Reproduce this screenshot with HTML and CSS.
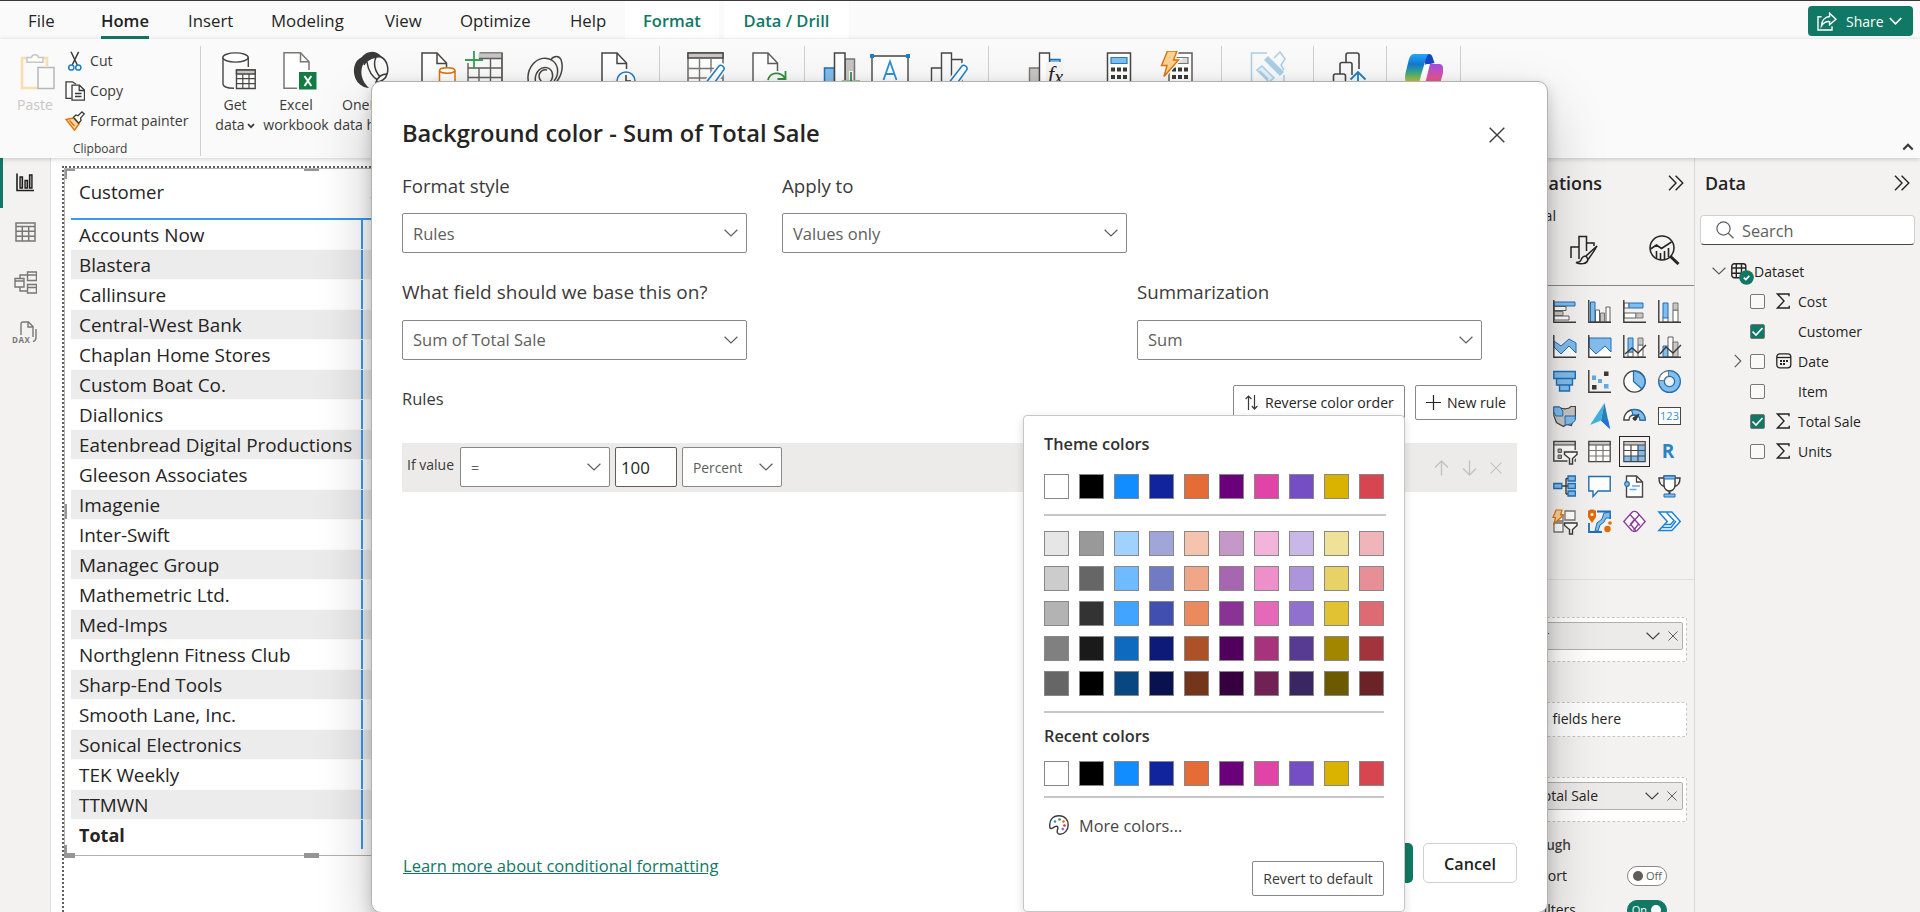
FILE: index.html
```html
<!DOCTYPE html>
<html lang="en">
<head>
<meta charset="utf-8">
<title>Background color</title>
<link rel="stylesheet" href="styles.css">
</head>
<body>
<svg class="defs" width="0" height="0">
  <defs>
    <symbol id="chev" viewBox="0 0 14 8"><path d="M.6.8 7 7 13.4.8" fill="none" stroke="currentColor" stroke-width="1.2"/></symbol>
    <symbol id="cross" viewBox="0 0 14 14"><path d="M.6.6 13.4 13.4M13.4.6.6 13.4" fill="none" stroke="currentColor" stroke-width="1.2"/></symbol>
    <symbol id="dbl" viewBox="0 0 16 16"><path d="M1 .8 8 8 1 15.200M7.600.8 14.800 8 7.600 15.200" fill="none" stroke="currentColor" stroke-width="1.400"/></symbol>
    <symbol id="sigma" viewBox="0 0 14 16"><path d="M13 3.200V1H1.500L8 8 1.500 15H13.200V12.800" fill="none" stroke="currentColor" stroke-width="1.400"/></symbol>
    <linearGradient id="cpA" x1="0" y1="0" x2="0" y2="1"><stop offset="0" stop-color="#22a7f5"/><stop offset=".35" stop-color="#1478d4"/><stop offset=".65" stop-color="#3fae7a"/><stop offset="1" stop-color="#f5c518"/></linearGradient>
    <linearGradient id="cpB" x1="0" y1="0" x2="0" y2="1"><stop offset="0" stop-color="#a24be8"/><stop offset=".5" stop-color="#e0559c"/><stop offset="1" stop-color="#f4633a"/></linearGradient>
  </defs>
</svg>
<div class="app">
  <header class="menubar">
    <nav class="menu">
      <a class="m m-file">File</a><a class="m m-home">Home</a><a class="m m-insert">Insert</a><a class="m m-model">Modeling</a><a class="m m-view">View</a><a class="m m-opt">Optimize</a><a class="m m-help">Help</a><a class="m ctx c-format">Format</a><a class="m ctx c-drill">Data / Drill</a>
    </nav>
    <button class="share">
      <svg width="20" height="19" viewBox="0 0 20 19" fill="none" stroke="#fff" stroke-width="1.400"><path d="M4.500 4.700H1V18h14v-3.800"/><path d="M12.600 1.300 19 7.200l-6.400 5.600V9.600C8.800 9.300 6.500 10.600 4.400 14c.2-5.200 3.300-9 8.200-9.500z"/></svg>
      <span>Share</span>
      <svg class="share-chev" width="13" height="8" viewBox="0 0 13 8"><path d="M.8 1 6.500 6.800 12.200 1" fill="none" stroke="#fff" stroke-width="1.600"/></svg>
    </button>
  </header>

  <section class="ribbon">
    <div class="grp g1">
      <div class="clip">
        <div class="paste">
          <svg width="36" height="40" viewBox="0 0 36 40"><path d="M8 7H2v30h16M22 7h5v8" fill="none" stroke="#f9dcb0" stroke-width="2.600"/><path d="M4.500 10v25h12V16H25v-6z" fill="#fafafa"/><path d="M7 6.500h4.500a3.600 3.600 0 0 1 7 0H23v4.800H7z" fill="#fff" stroke="#c8c6c4" stroke-width="1.500"/><path d="M18 16.500h16v21H18z" fill="#fafafa" stroke="#b9b7b5" stroke-width="1.500"/></svg>
          <span>Paste</span>
        </div>
        <div class="cliplist">
          <div class="cl"><svg width="20" height="20" viewBox="0 0 20 20" fill="none"><path d="M6 .8 12.300 14M13.600.8 7.200 14" stroke="#3b3a39" stroke-width="1.500"/><circle cx="6.300" cy="16.500" r="2.600" stroke="#1f7fc4" stroke-width="1.500"/><circle cx="13.300" cy="16.500" r="2.600" stroke="#1f7fc4" stroke-width="1.500"/></svg>Cut</div>
          <div class="cl"><svg width="20" height="20" viewBox="0 0 20 20" fill="none" stroke="#3b3a39" stroke-width="1.300"><path d="M6.500 17.300H1V.8h6.500l3.500 2.500"/><path d="M7 4.200h7.500l5 5v10H7z" fill="#fafafa"/><path d="M14.200 4.500v5h5M10 12.500h6.500M10 15.500h6.500"/></svg>Copy</div>
          <div class="cl"><svg width="20" height="20" viewBox="0 0 20 20" fill="none"><path d="M1 8.500 8.500 7l5.500 6-4.500 6.200z" fill="#fcd9a8" stroke="#d9730d" stroke-width="1.400"/><path d="M4.500 9.500 9.500 15" stroke="#d9730d" stroke-width="1.400"/><path d="M8.500 6.300 11 4l2 .8L17 .9l2.300 2-3.800 4.200.6 2.300-2.400 2.800z" fill="#fff" stroke="#3b3a39" stroke-width="1.300"/></svg>Format painter</div>
        </div>
      </div>
      <div class="glabel">Clipboard</div>
    </div>
    <div class="grp g2">
      <div class="btn b-get"><svg width="36" height="40" viewBox="0 0 36 40" fill="none" stroke="#484644" stroke-width="1.400"><path d="M2 6v27c0 2.500 4.500 4.300 11 4.300"/><ellipse cx="14.500" cy="6.500" rx="12.700" ry="4.600" fill="#fff"/><path d="M27.300 6v10"/><path d="M15.500 19h18.700v18.500H15.500z" fill="#fff"/><path d="M15.500 19h18.700v4H15.500z" fill="#c8c6c4"/><path d="M15.500 27.700h18.700M15.500 32.600h18.700M21.800 23v14.500M28 23v14.500" stroke-width="1.200"/></svg><span>Get</span><span class="l2">data<svg class="tiny" width="8" height="6" viewBox="0 0 8 6"><path d="m1 1.200 3 3 3-3" fill="none" stroke="#3b3a39" stroke-width="1.700"/></svg></span></div>
      <div class="btn b-excel"><svg width="36" height="40" viewBox="0 0 36 40" fill="none"><path d="M15 37.300H2V1.700h16.500l8.500 9V19" fill="#fff" stroke="#797775" stroke-width="1.500"/><path d="M18.500 2v8.700H27" stroke="#797775" stroke-width="1.500"/><path d="M17 21h17.500v17.500H17z" fill="#107c41"/><path d="m22.500 25 6.800 10M29.300 25l-6.800 10" stroke="#fff" stroke-width="2"/></svg><span>Excel</span><span class="l2">workbook</span></div>
      <div class="btn b-lake"><svg width="36" height="40" viewBox="0 0 36 40" fill="none" stroke="#3b3a39" stroke-width="1.500"><path d="M9 7C2 10 0 19 3 27c2 5 7 8.500 11 9-6-6-8-15-5-22 2-4 5-7 8-8z" fill="#3b3a39"/><path d="M9 7c4-6 13-8 19-1-6-1-14 2-17 8" fill="#3b3a39"/><path d="M28 6c6 3 8 11 6 17M14 11c1 8 5 15 12 19M23 6c-3 7-1 14 4 20"/><path d="M34 23c-5 0-9 3-11 8 5 0 10-3 11-8z" fill="#fff"/></svg><span>OneLake</span><span class="l2">data hub<svg class="tiny" width="8" height="6" viewBox="0 0 8 6"><path d="m1 1.200 3 3 3-3" fill="none" stroke="#3b3a39" stroke-width="1.700"/></svg></span></div>
      <div class="btn b-sql"><svg width="36" height="40" viewBox="0 0 36 40" fill="none"><path d="M2 38V2h15l9.500 10v4" fill="#fff" stroke="#484644" stroke-width="1.500"/><path d="M17 2v10.500h9.500" stroke="#484644" stroke-width="1.500"/><path d="M19.500 19.500V38h15.500V19.500" fill="#fff" stroke="#d9730d" stroke-width="1.500"/><ellipse cx="27.200" cy="19.500" rx="7.700" ry="2.700" fill="#fff" stroke="#d9730d" stroke-width="1.500"/></svg></div>
      <div class="btn b-enter"><svg width="38" height="40" viewBox="0 0 38 40" fill="none"><path d="M3 12v26M14.500 2H37v36H3" stroke="#605e5c" stroke-width="1.400"/><path d="M13.500 2.500h23v5h-23z" fill="#c8c6c4"/><path d="M37 2v36M3 17h34M3 26.500h34M14 17v20M25.500 7.500V38M14 7.500h23" stroke="#605e5c" stroke-width="1.400"/><path d="M9 0v18M0 9h18" stroke="#35a156" stroke-width="1.800"/></svg></div>
      <div class="btn b-data"><svg width="36" height="40" viewBox="0 0 36 40" fill="none" stroke="#484644" stroke-width="1.500"><path d="M5 38C-1 31 0 20 6 13c5-6 14-8 20-3 6 5 6 14 1 20"/><path d="M12 38c-5-5-5-14 0-19 4-4 11-3 13 2 2 6-1 11-6 11-4 0-7-3-7-7s4-7 8-6"/><path d="M24 8.500c3-4 8-4 10 0 3 9 0 19-8 26"/></svg></div>
      <div class="btn b-rec"><svg width="36" height="40" viewBox="0 0 36 40" fill="none"><path d="M2 38V2h15l9.500 10v6" fill="#fff" stroke="#484644" stroke-width="1.500"/><path d="M17 2v10.500h9.500" stroke="#484644" stroke-width="1.500"/><circle cx="26" cy="30" r="9" fill="#fff" stroke="#1f7fc4" stroke-width="1.500"/><path d="M26 24v6h5" stroke="#3b3a39" stroke-width="1.500"/></svg></div>
    </div>
    <div class="grp g3">
      <div class="btn b-trans"><svg width="40" height="40" viewBox="0 0 40 40" fill="none"><path d="M2 2h35v36H2z" fill="#fff" stroke="#605e5c" stroke-width="1.400"/><path d="M2 2h35v5H2z" fill="#c8c6c4" stroke="#484644" stroke-width="1.400"/><path d="M2 17.500h35M2 27h35M13.500 7v31M25 7v31" stroke="#797775" stroke-width="1.400"/><path d="m19 33 14-18c1.500-2 6 .5 5 3.500L24 38z" fill="#fff" stroke="#fafafa" stroke-width="5"/><path d="m19 33 14-18c1.500-2 6 .5 5 3.500L24 38z" fill="#fff" stroke="#1f7fc4" stroke-width="1.500"/></svg></div>
      <div class="btn b-refresh"><svg width="36" height="40" viewBox="0 0 36 40" fill="none"><path d="M2 38V2h15l9.500 10v8" fill="#fff" stroke="#605e5c" stroke-width="1.500"/><path d="M17 2v10.500h9.500" stroke="#605e5c" stroke-width="1.500"/><path d="M17 29c2-8 12-9 17-2M34.500 20v8h-8" stroke="#35913f" stroke-width="1.800"/></svg></div>
    </div>
    <div class="grp g4">
      <div class="btn b-newv"><svg width="38" height="40" viewBox="0 0 38 40" fill="none" stroke-width="1.500"><path d="M1.500 17h10v22h-10z" fill="#83bdec" stroke="#1f6fb5"/><path d="M22 8h9.500v30H22z" fill="#c8c6c4" stroke="#797775"/><path d="M11.500 2H22v37H11.500z" fill="#fff" stroke="#484644"/><path d="M28 20v18M19 31h18" stroke="#fafafa" stroke-width="4"/><path d="M28 21v18M19 30.500h18" stroke="#35913f" stroke-width="1.800"/></svg></div>
      <div class="btn b-text"><svg width="40" height="40" viewBox="0 0 40 40" fill="none"><path d="M2 5h36v34H2z" fill="#fff" stroke="#484644" stroke-width="1.400"/><path d="M0 3h4v4H0zM36 3h4v4h-4z" fill="#1f7fc4"/><path d="m13.500 29 6.500-18.500L26.500 29M15.800 23h8.400" stroke="#2f8fd6" stroke-width="1.800"/></svg></div>
      <div class="btn b-more"><svg width="38" height="40" viewBox="0 0 38 40" fill="none" stroke="#484644" stroke-width="1.400"><path d="M1.500 39V17h10v22M11.500 39V2h10v37M21.500 8.500H32V39"/><path d="m18 33 14-18c1.500-2 6 .5 5 3.500L23 38z" fill="#fff" stroke="#fafafa" stroke-width="5"/><path d="m18 33 14-18c1.500-2 6 .5 5 3.500L23 38z" fill="#fff" stroke="#1f7fc4" stroke-width="1.500"/></svg></div>
    </div>
    <div class="grp g5">
      <div class="btn b-meas"><svg width="36" height="40" viewBox="0 0 36 40" fill="none" stroke-width="1.400"><path d="M1.500 17h10v22h-10z" fill="#c8c6c4" stroke="#797775"/><path d="M21.500 8.500H32v12H21.500z" fill="#83bdec" stroke="#1f6fb5"/><path d="M11.500 2h10v37h-10z" fill="#fff" stroke="#484644"/></svg><i class="fx">f<small>x</small></i></div>
      <div class="btn b-calc"><svg width="26" height="40" viewBox="0 0 26 40"><path d="M1.500 2h23v37h-23z" fill="#fff" stroke="#484644" stroke-width="1.500"/><path d="M5 6.500h16v6H5z" fill="#83bdec" stroke="#1f7fc4" stroke-width="1.200"/><path d="M5 16.500h4v4H5zm6 0h4v4h-4zm6 0h4v4h-4zM5 24h4v4H5zm6 0h4v4h-4zm6 0h4v4h-4z" fill="#3b3a39"/></svg></div>
      <div class="btn b-quick"><svg width="34" height="40" viewBox="0 0 34 40"><path d="M9 2h23v37H9z" fill="#fff" stroke="#605e5c" stroke-width="1.500"/><path d="M16 6.500h12v6H16z" fill="#e1dfdd" stroke="#797775" stroke-width="1.200"/><path d="M12 16.500h4v4h-4zm6 0h4v4h-4zm6 0h4v4h-4zM12 24h4v4h-4zm6 0h4v4h-4zm6 0h4v4h-4z" fill="#3b3a39"/><path d="M7.500 0H17l-3.500 9h5L4 25.500l3-11H1.500z" fill="#fcd293" stroke="#fafafa" stroke-width="4"/><path d="M7.500 0H17l-3.500 9h5L4 25.500l3-11H1.500z" fill="#fcd293" stroke="#d9730d" stroke-width="1.400"/></svg></div>
    </div>
    <div class="grp g6"><div class="btn"><svg width="36" height="40" viewBox="0 0 36 40" fill="none" stroke="#a9cfe8" stroke-width="1.500"><path d="M17 2H1.500v37H34V24"/><path d="m7 19 5-4 12 12-5 4zM10 20l8 8" fill="#e3f1fa"/><path d="m15 9 3-3 15 15-3 3z" fill="#a9cfe8"/><path d="m24 7 6-6 5 7-4 6 3 5"/></svg></div></div>
    <div class="grp g7"><div class="btn"><svg width="36" height="40" viewBox="0 0 36 40" fill="none" stroke="#484644" stroke-width="1.600"><path d="M1.500 39V25c0-1.500.5-2 2-2h8c1.500 0 2 .5 2 2v14M8 23v-9.500c0-1.500.5-2 2-2h8c1.500 0 2 .5 2 2V24M14 11.500V4c0-1.500.5-2 2-2h9c1.500 0 2 .5 2 2v14"/><path d="M26 39V21M18.500 28.500 26 21l7.500 7.500" stroke="#1f7fc4" stroke-width="1.800"/></svg></div></div>
    <div class="grp g8"><div class="btn"><svg width="38" height="40" viewBox="0 0 38 40"><path d="M18 3h6c3 0 3.500 3 4.500 6l1 3-9 2z" fill="#1746c7"/><path d="M9 3h15c-2 1-3 4-4 8l-4 13c-1 6-2 9-5 9H4c-4 0-4.500-5-3.500-11l3-12c1-4 2.500-7 5.500-7z" fill="url(#cpA)"/><path d="M22 13h12c4 0 5 4 4 9l-3 11c-1 5-3 6-7 6H12c-2 0-3-3-2-6h5c3 0 3-2 4-5z" fill="url(#cpB)"/><path d="M22.500 13c-2 0-3 2-3.500 4l-4.500 15h3.500c2 0 2.500-1 3-3l4-16z" fill="#fff"/></svg></div></div>
    <svg class="collapse" width="12" height="8" viewBox="0 0 12 8"><path d="m1.300 6.500 4.700-4.700 4.700 4.700" fill="none" stroke="#3b3a39" stroke-width="2.200"/></svg>
  </section>

  <main class="body">
    <aside class="views">
      <div class="v on"><svg width="18" height="19" viewBox="0 0 18 19" fill="none" stroke="#201f1e" stroke-width="1.300"><path d="M1 .5V17.500h17" stroke-width="1.600"/><path d="M4 4h2.500v11H4zM9 7.500h2.500V15H9zM13.500 2H16v13h-2.500z" fill="#a19f9d"/></svg></div>
      <div class="v"><svg width="21" height="20" viewBox="0 0 21 20" fill="none" stroke="#797775" stroke-width="1.500"><path d="M1 1h19v18H1zM1 4.500h19M1 9.300h19M1 14.200h19M7.300 4.500V19M13.700 4.500V19"/></svg></div>
      <div class="v"><svg width="23" height="23" viewBox="0 0 23 23" fill="none" stroke="#797775" stroke-width="1.400"><path d="M1 7.500h9v8.500H1zM1 10h9M13.500 1h9v8.500h-9zM13.500 4h9M13.500 13.500h9V22h-9zM13.500 16.500h9M6 7V4h7.500M6 16v4h7.500"/></svg></div>
      <div class="v"><svg width="22" height="22" viewBox="0 0 22 22" fill="none" stroke="#797775" stroke-width="1.400"><path d="M6 14V3c0-1.500.7-2 2-2h5.500L18 5.500V16M13 1v5h5M21 8v8.500c0 2.500-1 3.500-3 4"/></svg><b class="dax">DAX</b></div>
    </aside>

    <section class="canvas">
      <div class="page">
        <div class="visual">
          <i class="h tl"></i><i class="h tm"></i><i class="h ml"></i><i class="h bl"></i><i class="h bm"></i>
          <div class="thead"><span>Customer</span><span>Sum of Total Sale</span></div>
          <div class="trow"><span>Accounts Now</span></div>
          <div class="trow"><span>Blastera</span></div>
          <div class="trow"><span>Callinsure</span></div>
          <div class="trow"><span>Central-West Bank</span></div>
          <div class="trow"><span>Chaplan Home Stores</span></div>
          <div class="trow"><span>Custom Boat Co.</span></div>
          <div class="trow"><span>Diallonics</span></div>
          <div class="trow"><span>Eatenbread Digital Productions</span></div>
          <div class="trow"><span>Gleeson Associates</span></div>
          <div class="trow"><span>Imagenie</span></div>
          <div class="trow"><span>Inter-Swift</span></div>
          <div class="trow"><span>Managec Group</span></div>
          <div class="trow"><span>Mathemetric Ltd.</span></div>
          <div class="trow"><span>Med-Imps</span></div>
          <div class="trow"><span>Northglenn Fitness Club</span></div>
          <div class="trow"><span>Sharp-End Tools</span></div>
          <div class="trow"><span>Smooth Lane, Inc.</span></div>
          <div class="trow"><span>Sonical Electronics</span></div>
          <div class="trow"><span>TEK Weekly</span></div>
          <div class="trow"><span>TTMWN</span></div>
          <div class="trow total"><span>Total</span></div>
        </div>
      </div>
    </section>

    <aside class="viz">
      <div class="phead"><h3>Visualizations</h3><svg width="16" height="16"><use href="#dbl"/></svg></div>
      <div class="build">Build visual</div>
      <div class="vtabs">
        <svg width="28" height="30" viewBox="0 0 28 30" fill="none" stroke="#252423" stroke-width="1.500"><path d="M1 23V12h8M9 24V1.500h7.500V16M16.500 8H24v3"/><path d="M27 11 16 21l2 3.500c3-4 6-8 9-13.500zM16 21c-3 0-4 1-5 4-.7 2-2 2.500-5 2.500 4 2 11 2 12-3z"/></svg>
        <svg width="31" height="30" viewBox="0 0 31 30" fill="none" stroke="#252423" stroke-width="1.600"><circle cx="13" cy="13" r="12"/><path d="m1.500 14 6-4 5 3.500 10-6.500M7.500 16v7M11.500 18v7M15.500 16v8M19.500 13v9"/><path d="m21.500 21.500 8 7.500" stroke-width="3"/></svg>
      </div>
      <div class="vgrid">
        <svg viewBox="0 0 23 23"><path d="M1 2h21v4H1z" fill="#83bdec" stroke="#1f6fb5"/><path d="M1 6.500h12v4H1z" fill="#fff" stroke="#605e5c"/><path d="M1 11.500h9v4H1z" fill="#c8c6c4" stroke="#797775"/><path d="M1 16h15v4H1z" fill="#fff" stroke="#605e5c"/><path d="M.8 0v22.200H23" class="ax"/></svg>
        <svg viewBox="0 0 23 23"><path d="M2.500 2h4.500v20H2.500z" fill="#83bdec" stroke="#1f6fb5"/><path d="M7.500 10h4v12h-4zM18 7h4v15h-4z" fill="#fff" stroke="#605e5c"/><path d="M12.500 13h4v9h-4z" fill="#c8c6c4" stroke="#797775"/><path d="M.8 0v22.200H23" class="ax"/></svg>
        <svg viewBox="0 0 23 23"><path d="M1 3h5v5H1z" fill="#fff" stroke="#605e5c"/><path d="M6 3h14v5H6z" fill="#83bdec" stroke="#1f6fb5"/><path d="M1 13h12v5H1z" fill="#fff" stroke="#605e5c"/><path d="M13 13h7v5h-7z" fill="#c8c6c4" stroke="#797775"/><path d="M.8 0v22.200H23" class="ax"/></svg>
        <svg viewBox="0 0 23 23"><path d="M5 17h5v5H5zM15 10h5v12h-5z" fill="#fff" stroke="#605e5c"/><path d="M5 3h5v15H5z" fill="#83bdec" stroke="#1f6fb5"/><path d="M15 3h5v7h-5z" fill="#c8c6c4" stroke="#797775"/><path d="M.8 0v22.200H23" class="ax"/></svg>

        <svg viewBox="0 0 23 23"><path d="m1 14 7 5 8-9 7 8v4H1z" fill="#fff"/><path d="m1 6 7 5 8-7 7 4v10l-7-7-8 8-7-7z" fill="#83bdec" stroke="#1f6fb5"/><path d="M.8 0v22.200H23" class="ax"/></svg>
        <svg viewBox="0 0 23 23"><path d="M1 12v10h22V12z" fill="#fff"/><path d="M1 3h22v14l-6-6-9 8-7-7z" fill="#83bdec" stroke="#1f6fb5"/><path d="M.8 0v22.200H23" class="ax"/></svg>
        <svg viewBox="0 0 23 23"><path d="M5 17h5v5H5zM15 10h5v12h-5z" fill="#fff" stroke="#605e5c"/><path d="M5 3h5v14H5z" fill="#83bdec" stroke="#1f6fb5"/><path d="M15 3h5v7h-5z" fill="#c8c6c4" stroke="#797775"/><path d="m2 19 7-6 6 5 8-8" class="ax"/><path d="M.8 0v22.200H23" class="ax"/></svg>
        <svg viewBox="0 0 23 23"><path d="M5 11h5v11H5z" fill="#83bdec" stroke="#1f6fb5"/><path d="M10 2h5v20h-5z" fill="#fff" stroke="#605e5c"/><path d="M15 7h5v15h-5z" fill="#c8c6c4" stroke="#797775"/><path d="m2 19 6-7 7 6 8-8" class="ax"/><path d="M.8 0v22.200H23" class="ax"/></svg>

        <svg viewBox="0 0 23 23"><path d="M.8 1.500h21.500v7H.8zM3.500 8.500h16V15h-16zM6.500 15h10v6h-10z" fill="#83bdec" stroke="#1f6fb5" stroke-width="1.400"/></svg>
        <svg viewBox="0 0 23 23"><path d="M.8 0v22.200H23" class="ax"/><path d="M16 1.500h4.500V6H16zM4 15h4.500v4.500H4z" fill="#3b3a39"/><path d="M4 5.500h4V10H4zM10 9h4v4h-4zM16 14h4.500v4.500H16z" fill="#64a9e2"/></svg>
        <svg viewBox="0 0 23 23"><circle cx="11.500" cy="11.500" r="10.700" fill="#fff" stroke="#484644" stroke-width="1.300"/><path d="M10.500.8v10.700l8.500 7.500c7-9 1-17-8.500-18.200z" fill="#83bdec" stroke="#1f6fb5" stroke-width="1.300"/></svg>
        <svg viewBox="0 0 23 23"><circle cx="11.500" cy="11.500" r="8" fill="none" stroke="#1f6fb5" stroke-width="7"/><circle cx="11.500" cy="11.500" r="8" fill="none" stroke="#83bdec" stroke-width="4.500"/><path d="M1 10.500C1.500 5 5 1.500 10.500 1v5C8 6.500 6.500 8 6 10.500z" fill="#fff" stroke="#797775"/></svg>

        <svg viewBox="0 0 23 23"><path d="M.8 2h5c3 2.500 10 2.500 12-.5h4.600v12l-3 4-1 3-5-1-3 2-7-4-2.600-7z" fill="#c8c6c4" stroke="#484644" stroke-width="1.200"/><path d="M.8 2h6l3 4v5H3L.8 7zM12 11h10.200v4.500l-4 3.500-6 1z" fill="#83bdec" stroke="#1f6fb5"/></svg>
        <svg viewBox="0 0 23 23"><path d="M16.500-2 2 20l11-4.500z" fill="#3fb0e0"/><path d="M16.500-2 22 24l-9-8.500z" fill="#2a7fb8"/><path d="m13 15.500 9 8.500-2-9z" fill="#1b74e0"/></svg>
        <svg viewBox="0 0 23 23"><path d="M.8 15C1 9 5 4.500 11.500 4.500S22 9 22.200 15H17c0-3-2-5-5.500-5S6 12 6 15z" fill="#fff" stroke="#484644" stroke-width="1.300"/><path d="M8.500 5C17 3 22 9 22.200 15H17c0-3-2-6-7-5z" fill="#83bdec" stroke="#1f6fb5" stroke-width="1.200"/><path d="m16 9-3 6a2 2 0 0 1-3-2z" fill="#3b3a39" stroke="#3b3a39"/></svg>
        <span class="card123">123</span>

        <svg viewBox="0 0 23 23"><path d="M.8 1.500h21.400V21H.8z" fill="#fff" stroke="#484644" stroke-width="1.400"/><path d="M1 1.500h21v3.500H1z" fill="#c8c6c4" stroke="#484644"/><path d="M5 9h3.500v3.500H5zM5 15h3.500v3.500H5z" fill="#a19f9d" stroke="#605e5c"/><path d="M11.500 12H24v2.500l-4.500 4V24h-3v-5.500l-5-4z" fill="#fff" stroke="#f3f2f1" stroke-width="4"/><path d="M11.500 12H24v2.500l-4.500 4V24h-3v-5.500l-5-4z" fill="#fff" stroke="#3b3a39" stroke-width="1.400"/></svg>
        <svg viewBox="0 0 23 23"><path d="M.8 1.500h21.400v20.200H.8z" fill="#fff" stroke="#484644" stroke-width="1.300"/><path d="M1 1.500h21V5H1z" fill="#c8c6c4" stroke="#484644"/><path d="M1 10.500h21M1 16h21M8 5v16.500M15 5v16.500" fill="none" stroke="#797775" stroke-width="1.200"/></svg>
        <svg class="sel" viewBox="0 0 23 23"><path d="M.8 1.500h21.400v20.200H.8z" fill="#fff"/><path d="M15 5h7v16.500H1V16h14z" fill="#83bdec"/><path d="M1 1.500h21V5H1z" fill="#c8c6c4"/><path d="M.8 1.500h21.400v20.200H.8zM1 5h21M1 10.500h21M1 16h21M8 5v16.500M15 5v16.500" fill="none" stroke="#484644" stroke-width="1.200"/></svg>
        <span class="rvis">R</span>

        <svg viewBox="0 0 23 23"><path d="M9 11h4.500M13 3.500v15.500M13 3.500h3M13 19h3M13 11h3" fill="none" stroke="#3b3a39" stroke-width="1.400"/><path d="M.8 8.500h8v5h-8zM15 1h7.300v5H15zM15 8.500h7.300v5H15zM15 16h7.300v5H15z" fill="#83bdec" stroke="#1f6fb5" stroke-width="1.300"/></svg>
        <svg viewBox="0 0 23 23"><path d="M.8 1.500h21.400V16H10l-5 5.500V16H.8z" fill="#fff" stroke="#1f6fb5" stroke-width="1.400"/></svg>
        <svg viewBox="0 0 23 23"><path d="M3.500 1h10l6 6v15h-16z" fill="#fff" stroke="#484644" stroke-width="1.400"/><path d="M13.500 1v6h6" fill="none" stroke="#484644" stroke-width="1.300"/><path d="M9 11h8M6.500 14.500h7" stroke="#64a9e2" stroke-width="1.400"/><circle cx="4" cy="9" r="2.300" fill="#83bdec" stroke="#1f6fb5" stroke-width="1.200"/></svg>
        <svg viewBox="0 0 23 23"><path d="M6 3H1c0 6 2 8 6 8.500M17 3h5c0 6-2 8-6 8.500" fill="none" stroke="#3b3a39" stroke-width="1.400"/><path d="M6 1h11v9c0 5-4 6-5.500 6S6 15 6 10z" fill="#fff" stroke="#3b3a39" stroke-width="1.400"/><path d="M6 1h11v3H6zM6 19h11v3H6z" fill="#83bdec" stroke="#1f6fb5"/><path d="M11.500 16v3" stroke="#3b3a39" stroke-width="2"/></svg>

        <svg viewBox="0 0 23 23"><path d="M12 1h10v9H12zM1 13h9v9H1zM4 5h6v6H4z" fill="#fff" stroke="#797775" stroke-width="1.300"/><path d="M11.500 13H24v2.500l-4.500 4V24h-3v-4.500l-5-4z" fill="#fff" stroke="#3b3a39" stroke-width="1.400"/><path d="M3 0h6L7.500 5h3L1 14l1.500-6.500H0z" fill="#fcd293" stroke="#d9730d" stroke-width="1.200"/></svg>
        <svg viewBox="0 0 23 23"><path d="M9 1.500h13V9M1 13v9h13" fill="none" stroke="#1f6fb5" stroke-width="1.800"/><path d="M22 2v6h-4l-2 4-4 3-2 6H7l2-8 5-4 2-6z" fill="#83bdec" stroke="#1f6fb5"/><path d="M0 1c2-2 6-2 8 0v6l-4 6-4-6z" fill="#e06c00"/><circle cx="4" cy="4.500" r="1.500" fill="#fff"/><circle cx="19.500" cy="19" r="3.200" fill="#e06c00"/><circle cx="22" cy="13" r="1.800" fill="#e06c00"/></svg>
        <svg viewBox="0 0 23 23" fill="none" stroke="#8a3a9c" stroke-width="1.300"><path d="M.8 11.500 9 2.300c1-1.200 4-1.200 5 0l8.200 9.200-8.200 9.200c-1 1.200-4 1.200-5 0z" fill="#fff"/><path d="m7 4.500 10 11M16.500 4.500 6.500 16M11.500 9.500 7.500 14M15.500 14l-5 6.500M7.500 14l5.500 7"/></svg>
        <svg viewBox="0 0 23 23" fill="none" stroke="#1780dd" stroke-width="1.400"><path d="M.8 2h13l8.500 9.500-8.500 9h-13l8.500-9z" fill="#fff"/><path d="M8.500 2.500 16 10.500M4 17.500h9l5-6.500M6.500 14.500h6l4-4.500"/></svg>
      </div>
      <div class="wells">
        <div class="well w1"><div class="chip"><span>Customer</span><svg width="14" height="8"><use href="#chev"/></svg><svg width="10" height="10"><use href="#cross"/></svg></div></div>
        <div class="well w2">Add data fields here</div>
        <div class="well w3"><div class="chip"><span>Sum of Total Sale</span><svg width="14" height="8"><use href="#chev"/></svg><svg width="10" height="10"><use href="#cross"/></svg></div></div>
        <div class="dt"><span>Drill through</span></div>
        <div class="dr"><span>Cross-report</span><div class="tog">Off</div></div>
        <div class="dr r2"><span>Keep all filters</span><div class="tog on">On</div></div>
      </div>
    </aside>

    <aside class="data">
      <div class="phead"><h3>Data</h3><svg width="16" height="16"><use href="#dbl"/></svg></div>
      <div class="search"><svg width="18" height="18" viewBox="0 0 18 18" fill="none" stroke="#605e5c" stroke-width="1.200"><circle cx="7.500" cy="7.500" r="6.600"/><path d="m12.300 12.300 5.200 5"/></svg><span>Search</span></div>
      <div class="tree">
        <div class="ds"><svg class="dchev" width="14" height="8"><use href="#chev"/></svg>
          <div class="dsi"><svg width="16" height="16" viewBox="0 0 16 16" fill="none" stroke="#252423" stroke-width="1.400"><rect x=".8" y=".8" width="14" height="14" rx="2.500"/><path d="M1 5h14M1 10.300h14M5.300 1v14M10.500 1v14"/></svg><svg class="badge" width="15" height="15" viewBox="0 0 15 15"><circle cx="7.500" cy="7.500" r="7.300" fill="#117865"/><path d="m4.800 7.600 2 2 3.500-3.700" fill="none" stroke="#fff" stroke-width="1.700"/></svg></div>Dataset</div>
        <div class="f"><i class="cb"></i><svg class="ic" width="14" height="16"><use href="#sigma"/></svg><span>Cost</span></div>
        <div class="f"><i class="cb on"><svg width="13" height="13" viewBox="0 0 13 13"><path d="M1.500 6.500 5 10l6.500-7" fill="none" stroke="#fff" stroke-width="1.600"/></svg></i><i class="ic"></i><span>Customer</span></div>
        <div class="f exp"><svg class="xp" width="8" height="14" viewBox="0 0 8 14"><path d="m.8.8 6 6.200-6 6.200" fill="none" stroke="#605e5c" stroke-width="1.200"/></svg><i class="cb"></i><svg class="ic" width="16" height="16" viewBox="0 0 16 16" fill="none" stroke="#252423" stroke-width="1.300"><rect x=".8" y=".8" width="14" height="14" rx="3"/><path d="M1 4.500h14"/><path d="M4 8h2M7 8h2M10 8h2M4 11h2M7 11h2" stroke-width="1.800"/></svg><span>Date</span></div>
        <div class="f"><i class="cb"></i><i class="ic"></i><span>Item</span></div>
        <div class="f"><i class="cb on"><svg width="13" height="13" viewBox="0 0 13 13"><path d="M1.500 6.500 5 10l6.500-7" fill="none" stroke="#fff" stroke-width="1.600"/></svg></i><svg class="ic" width="14" height="16"><use href="#sigma"/></svg><span>Total Sale</span></div>
        <div class="f"><i class="cb"></i><svg class="ic" width="14" height="16"><use href="#sigma"/></svg><span>Units</span></div>
      </div>
    </aside>
  </main>

  <section class="dialog">
    <div class="dhead"><h2>Background color - Sum of Total Sale</h2><svg width="16" height="16"><use href="#cross"/></svg></div>
    <div class="frow">
      <div class="fld"><label>Format style</label><div class="dd">Rules<svg width="14" height="8"><use href="#chev"/></svg></div></div>
      <div class="fld"><label>Apply to</label><div class="dd">Values only<svg width="14" height="8"><use href="#chev"/></svg></div></div>
    </div>
    <div class="frow second">
      <div class="fld"><label class="wide-label">What field should we base this on?</label><div class="dd">Sum of Total Sale<svg width="14" height="8"><use href="#chev"/></svg></div></div>
      <div class="fld"><label>Summarization</label><div class="dd">Sum<svg width="14" height="8"><use href="#chev"/></svg></div></div>
    </div>
    <div class="rhead"><span class="rl">Rules</span>
      <button class="ob rev"><svg width="13" height="15" viewBox="0 0 13 15" fill="none" stroke="#3b3a39" stroke-width="1.200"><path d="M3.500 15V1M.6 4l2.900-3 2.900 3M9.500 0v14M6.800 11l2.700 3 2.900-3"/></svg>Reverse color order</button>
      <button class="ob new"><svg width="15" height="15" viewBox="0 0 15 15" stroke="#252423" stroke-width="1.200"><path d="M7.500 0v15M0 7.500h15"/></svg>New rule</button>
    </div>
    <div class="rule">
      <span class="iv">If value</span>
      <div class="dd op"><span>=</span><svg width="14" height="8"><use href="#chev"/></svg></div>
      <div class="num">100</div>
      <div class="dd pc"><span>Percent</span><svg width="14" height="8"><use href="#chev"/></svg></div>
      <div class="acts">
        <svg width="15" height="16" viewBox="0 0 15 16" fill="none" stroke="#c3c1bf" stroke-width="1.300"><path d="M7.500 15.500V1M1 7.500 7.500 1 14 7.500"/></svg>
        <svg width="15" height="16" viewBox="0 0 15 16" fill="none" stroke="#c3c1bf" stroke-width="1.300"><path d="M7.500.5V15M1 8.500 7.500 15 14 8.500"/></svg>
        <svg width="12" height="12"><use href="#cross"/></svg>
      </div>
    </div>
    <div class="dfoot"><a>Learn more about conditional formatting</a><button class="ok">OK</button><button class="cancel">Cancel</button></div>
  </section>

  <section class="picker">
    <h4>Theme colors</h4>
    <div class="sw theme" data-row="base"></div>
    <hr class="wide">
    <div class="sw shades"></div>
    <hr class="low">
    <h4 class="rc">Recent colors</h4>
    <div class="sw recent" data-row="base"></div>
    <hr class="last">
    <div class="more"><svg width="20" height="20" viewBox="0 0 20 20" fill="none"><path d="M1 13C-.5 5 4 .8 10 .8c6 0 9.200 4.200 9.200 9 0 5-3.500 9.400-8.200 9.400-3.500 0-3-3-2.300-5.200.7-2.300-.5-3.500-2.700-2.300C3.500 13 2 14.500 1 13z" stroke="#3b3a39" stroke-width="1.400"/><circle cx="6" cy="6.500" r="1.300" fill="#2f8fd6"/><circle cx="10.500" cy="4.500" r="1.300" fill="#35913f"/><circle cx="14.500" cy="6.500" r="1.300" fill="#d9730d"/><circle cx="15.500" cy="10.500" r="1.300" fill="#d13438"/><circle cx="13.800" cy="14" r="1.300" fill="#9b59d0"/></svg><span>More colors...</span></div>
    <button class="ob revert">Revert to default</button>
  </section>
</div>
<script src="swatches.js"></script>
</body>
</html>
```
FILE: swatches.js
```js
const base = "#FFFFFF #000000 #118DFF #12239E #E66C37 #6B007B #E044A7 #744EC2 #D9B300 #D64550".split(" ");
const shades = [
  "#E6E6E6 #999999 #A0D1FF #A0A7D8 #F5C4AF #C499CA #F3B4DC #C7B8E7 #F0E199 #EFB5B9",
  "#CCCCCC #666666 #70BBFF #717BC4 #F0A787 #A666B0 #EC8FCA #AC95DA #E8D166 #E68F96",
  "#B3B3B3 #333333 #41A4FF #414FB1 #EB895F #893395 #E669B9 #9071CE #E1C233 #DE6A73",
  "#808080 #1A1A1A #0D6ABF #0E1A77 #AD5129 #50005C #A8337D #573B92 #A38600 #A1343C",
  "#666666 #000000 #094780 #09124F #73361C #36003E #702254 #3A2761 #6D5A00 #6B2328"
].join(" ").split(" ");

function fill(el, colors) {
  for (const c of colors) {
    const s = document.createElement("i");
    s.style.backgroundColor = c;
    el.appendChild(s);
  }
}
document.querySelectorAll('[data-row="base"]').forEach(el => fill(el, base));
fill(document.querySelector(".shades"), shades);
```
FILE: styles.css
```css
* { box-sizing: border-box; }
body { margin: 0; font-family: "Open Sans", "Noto Sans", sans-serif; color: #252423; background: #fff; }
h2, h3, h4 { margin: 0; font-weight: 600; }
button { font-family: inherit; cursor: pointer; padding: 0; }
svg { display: block; flex: none; }
.defs { position: absolute; }
.app { position: relative; width: 1920px; height: 912px; overflow: hidden; display: flex; flex-direction: column; border-top: 1px solid #3b3a39; }

/* menu bar */
.menubar { height: 38px; flex: none; background: #fafafa; display: flex; justify-content: space-between; }
.menu { display: flex; padding-left: 28px; }
.m { font-size: 16.8px; line-height: 39px; height: 38px; white-space: nowrap; }
.m-file { width: 73px; }
.m-home { width: 48px; margin-right: 39px; font-weight: 600; font-size: 16.6px; box-shadow: inset 0 -3px #117865; color: #201f1e; }
.m-insert { width: 83px; }
.m-model { width: 114px; }
.m-view { width: 75px; }
.m-opt { width: 110px; }
.m-help { width: 55px; }
.ctx { background: #fff; color: #117865; font-weight: 600; font-size: 16.5px; text-align: center; }
.c-format { width: 94px; margin-right: 5px; }
.c-drill { width: 125px; }
.share { width: 105px; height: 30px; margin: 5px 7px 0 0; border: 0; border-radius: 4px; background: #117865; color: #fff; font-size: 14px; display: flex; align-items: center; padding-left: 9px; }
.share span { margin-left: 9px; margin-right: 5px; }

/* ribbon */
.ribbon { height: 119px; flex: none; background: #fafafa; display: flex; padding-top: 7px; position: relative; z-index: 1; box-shadow: 0 1px 5px rgba(0,0,0,.2); font-size: 14.1px; color: #3b3a39; }
.grp { height: 110px; border-right: 1px solid #d2d0ce; display: flex; padding-top: 5px; flex: none; }
.btn { display: flex; flex-direction: column; align-items: center; line-height: 20px; white-space: nowrap; flex: none; }
.btn > span { margin-top: 4px; }
.btn > .l2 { margin-top: 0; display: flex; align-items: center; }
.tiny { margin: 2px 0 0 2px; }
.g1 { width: 201px; flex-direction: column; padding-left: 17px; }
.clip { display: flex; height: 84px; flex: none; }
.paste { width: 36px; margin-right: 12px; line-height: 20px; color: #c8c6c4; display: flex; flex-direction: column; align-items: center; }
.paste svg { margin-left: 6px; }
.paste span { margin-top: 4px; }
.cliplist { display: flex; flex-direction: column; gap: 10px; white-space: nowrap; }
.cl { display: flex; gap: 5px; line-height: 20px; }
.glabel { font-size: 12px; line-height: 20px; padding: 4px 0 0 56px; }
.g2 { width: 459px; padding-left: 7px; }
.b-get { width: 54px; }
.b-get > svg { margin-left: 8px; }
.b-excel { width: 68px; }
.b-excel > svg { margin-left: 7px; }
.b-lake { width: 82px; }
.b-lake .l2 { margin-right: 6px; }
.b-sql { width: 52px; }
.b-enter { width: 42px; }
.b-enter svg { margin-left: -2px; }
.b-data { width: 78px; }
.b-rec { width: 68px; }
.g3 { width: 145px; padding-left: 16px; }
.b-trans { width: 60px; }
.b-refresh { width: 66px; }
.g4 { width: 184px; padding-left: 14px; }
.b-newv { width: 46px; }
.b-text { width: 50px; }
.b-more { width: 68px; }
.g5 { width: 233px; padding-left: 20px; }
.b-meas { width: 74px; position: relative; }
.fx { position: absolute; left: 37px; top: 11px; font: italic 22px/24px "Liberation Serif", serif; color: #252423; background: #f6f6f6; padding-left: 2px; }
.fx small { font-size: 20px; position: relative; top: 3px; }
.b-calc { width: 71px; }
.b-quick { width: 46px; }
.g6 { width: 92px; justify-content: center; }
.g7 { width: 73px; justify-content: center; }
.g8 { width: 74px; justify-content: center; }
.collapse { margin: 97px 6px 0 auto; }

/* body */
.body { flex: 1; min-height: 0; display: flex; }
.views { width: 51px; flex: none; background: #f3f2f1; border-right: 1px solid #e1dfdd; }
.v { height: 50px; display: flex; flex-direction: column; align-items: center; justify-content: center; border-left: 3px solid transparent; padding: 0 2px 2px 0; position: relative; }
.v.on { border-color: #117865; padding-right: 3px; }
.dax { position: absolute; left: 9px; top: 28px; font: 700 8px/8px "Open Sans", sans-serif; color: #797775; background: #f3f2f1; letter-spacing: .5px; }
.canvas { width: 1419px; flex: none; padding: 8px 0 0 11px; }
.page { height: 746px; border: 2px dotted #605e5c; border-width: 2px 0 0 2px; }
.visual { position: relative; width: 500px; height: 688px; border: 1px solid #b3b0ad; padding-left: 6px; }
.h { position: absolute; background: #979593; }
.tl { left: 0; top: 0; width: 10px; height: 10px; background: none; border: 2px solid #979593; border-width: 2px 0 0 2px; }
.tm { left: 239px; top: 0; width: 15px; height: 2px; }
.ml { left: 0; top: 335px; width: 2px; height: 15px; }
.bl { left: -1px; bottom: -3px; width: 11px; height: 13px; background: none; border: 0 solid #979593; border-width: 0 0 5px 3px; }
.bm { left: 239px; bottom: -3px; width: 15px; height: 5px; }
.thead { display: flex; height: 51px; line-height: 46px; font-size: 18.6px; border-bottom: 2px solid #3599f5; padding-left: 8px; white-space: nowrap; }
.thead span:first-child { width: 291px; }
.trow { height: 30px; font-size: 18.9px; padding-left: 8px; background-clip: padding-box; border-bottom: 1px solid #fafafa; white-space: nowrap; }
.trow span { display: block; width: 284px; height: 29px; line-height: 31px; border-right: 2px solid #3599f5; }
.trow:nth-of-type(odd) { background-color: #ececec; }
.total { font-weight: 700; font-size: 18px; border: 0; }

/* visualizations pane */
.viz { width: 225px; flex: none; background: #f3f2f1; border-right: 1px solid #dad8d6; }
.phead { height: 50px; display: flex; align-items: center; justify-content: space-between; }
.phead h3 { font-size: 17.9px; }
.viz .phead { padding-right: 10px; }
.viz .phead h3 { width: 132px; display: flex; justify-content: flex-end; }
.build { width: 86px; line-height: 16px; height: 16px; font-size: 14.1px; text-align: right; }
.vtabs { height: 62px; border-bottom: 1px solid #8a8886; display: flex; gap: 51px; padding: 11px 0 0 100px; }
.vgrid { display: grid; grid-template-columns: repeat(4, 23px); grid-auto-rows: 23px; gap: 12px; padding: 14px 0 0 83px; height: 294px; align-content: start; border-bottom: 1px solid #e1dfdd; }
.vgrid svg { width: 23px; height: 23px; overflow: visible; }
.ax { fill: none; stroke: #3b3a39; stroke-width: 1.4; }
.sel { outline: 1px solid #252423; outline-offset: 3px; }
.card123 { border: 1.500px solid #484644; height: 18px; margin-top: 2px; background: #fff; color: #2f8fd6; font-size: 11px; line-height: 15px; text-align: center; }
.rvis { color: #2b83c2; font-weight: 700; font-size: 19px; line-height: 23px; text-align: center; padding-right: 3px; }
.wells { font-size: 14px; padding: 37px 7px 0 10px; }
.well { border: 1px dashed #c8c6c4; background: #fff; border-radius: 2px; height: 45px; padding: 4px 3px 0; }
.w2 { height: 35px; margin: 40px 0; padding: 0 65px 0 0; text-align: right; line-height: 32px; }
.chip { height: 28px; border: 1px solid #b3b0ad; border-radius: 2px; background: #edebe9; display: flex; align-items: center; padding-right: 5px; gap: 8px; }
.chip svg { color: #484644; }
.chip span { width: 114px; display: flex; justify-content: flex-end; margin-right: 39px; white-space: nowrap; line-height: 26px; }
.w1 .chip span { width: 64px; margin-right: 89px; }
.dt { margin-top: 11px; line-height: 24px; font-weight: 600; font-size: 13.6px; width: 91px; display: flex; justify-content: flex-end; color: #484644; white-space: nowrap; }
.dr { margin-top: 9px; display: flex; height: 20px; line-height: 20px; white-space: nowrap; }
.dr span { width: 87px; display: flex; justify-content: flex-end; }
.dr .tog { margin-left: 60px; }
.r2 { margin-top: 14px; }
.r2 span { width: 96px; }
.dr.r2 .tog { margin-left: 51px; }
.tog { width: 40px; height: 20px; border: 1px solid #8a8886; border-radius: 10px; background: #fff; font-size: 11px; line-height: 18px; color: #605e5c; display: flex; align-items: center; gap: 3px; padding-left: 5px; }
.tog::before { content: ""; width: 10px; height: 10px; border-radius: 50%; background: #605e5c; }
.tog.on { background: #117865; border-color: #117865; color: #fff; flex-direction: row-reverse; padding: 0 5px 0 0; gap: 4px; }
.tog.on::before { background: #fff; }

/* data pane */
.data { flex: 1; background: #f3f2f1; font-size: 14px; }
.data .phead { padding: 0 10px 0 10px; }
.search { margin: 7px 5px 0; height: 30px; background: #fff; border: 1px solid #d2d0ce; border-bottom: 1px solid #484644; border-radius: 4px; font-size: 16.3px; color: #605e5c; display: flex; align-items: center; padding-left: 15px; gap: 8px; }
.search span { padding-top: 2px; }
.tree { padding-top: 11px; }
.ds, .f { height: 30px; display: flex; align-items: center; }
.ds { padding-left: 17px; }
.dchev { color: #605e5c; margin-right: 5px; }
.dsi { position: relative; width: 16px; margin-right: 7px; }
.badge { position: absolute; left: 8px; top: 7px; }
.f { padding-left: 55px; }
.f.exp { padding-left: 39px; }
.xp { margin-right: 8px; }
.cb { width: 15px; height: 15px; border: 1px solid #797775; border-radius: 2px; background: #faf9f8; margin-right: 11px; flex: none; }
.cb.on { background: #117865; }
.ic { width: 14px; margin-right: 8px; }
.exp .ic { width: 16px; margin-right: 6px; }

/* dialog */
.dialog { position: absolute; z-index: 5; left: 371px; top: 80px; width: 1177px; height: 832px; background: #fff; border: 1px solid #b3b0ad; border-radius: 10px; box-shadow: 0 26px 57px rgba(0,0,0,.22), 0 5px 14px rgba(0,0,0,.18); padding: 31px 30px 29px; display: flex; flex-direction: column; }
.dhead { height: 40px; display: flex; justify-content: space-between; align-items: center; padding-right: 12px; margin-bottom: 21px; color: #3b3a39; }
.dhead h2 { font-size: 23.7px; line-height: 40px; color: #252423; }
.dhead svg { margin-top: 3px; }
.frow { display: flex; gap: 35px; }
.frow label { display: block; font-size: 18.7px; line-height: 24px; margin-bottom: 15px; color: #3b3a39; }
.frow .wide-label { font-size: 19px; }
.frow.second { margin-top: 27px; justify-content: space-between; padding-right: 35px; }
.frow.second label { margin-bottom: 16px; }
.dd { width: 345px; height: 40px; background: #fff; border: 1px solid #8a8886; border-radius: 2px; display: flex; align-items: center; justify-content: space-between; padding: 0 8px 0 10px; font-size: 16.5px; color: #605e5c; }
.second .dd { padding-bottom: 1px; }
.rhead { margin-top: 25px; height: 35px; display: flex; }
.rl { font-size: 16.5px; line-height: 27px; flex: 1; color: #3b3a39; }
.ob { background: #fff; border: 1px solid #8a8886; border-radius: 2px; height: 35px; font-size: 14.1px; color: #252423; display: flex; align-items: center; white-space: nowrap; }
.rev { width: 172px; padding-left: 11px; gap: 7px; margin-right: 10px; }
.new { width: 102px; padding-left: 10px; gap: 6px; }
.rule { margin-top: 23px; height: 49px; background: #edebe9; display: flex; padding: 4px 15px 0 5px; font-size: 14px; color: #3b3a39; }
.iv { width: 53px; line-height: 36px; }
.op { width: 150px; margin-right: 5px; font-size: 14px; }
.num { width: 62px; height: 40px; border: 1px solid #605e5c; border-radius: 2px; background: #fff; font-size: 16.8px; line-height: 40px; padding-left: 5px; color: #252423; margin-right: 5px; }
.pc { width: 100px; font-size: 13.8px; }
.acts { margin-left: auto; display: flex; gap: 13px; align-items: center; height: 41px; color: #c3c1bf; }
.dfoot { margin-top: auto; display: flex; height: 40px; }
.dfoot a { color: #117865; font-size: 16.55px; line-height: 45px; text-decoration: underline; margin: 0 auto 0 1px; }
.ok { width: 94px; border: 0; border-radius: 5px; background: #117865; color: #fff; margin-right: 10px; }
.cancel { width: 94px; border: 1px solid #d2d0ce; border-radius: 5px; background: #fff; color: #201f1e; font-weight: 600; font-size: 16.2px; padding-top: 2px; }

/* colour picker */
.picker { position: absolute; z-index: 6; left: 1023px; top: 414px; width: 382px; height: 497px; background: #fff; border: 1px solid #c8c6c4; border-radius: 4px; box-shadow: 0 3px 10px rgba(0,0,0,.14); padding: 16px 20px 0; }
.picker h4 { font-size: 16.3px; line-height: 24px; color: #323130; }
.sw { display: grid; grid-template-columns: repeat(10, 25px); grid-auto-rows: 25px; gap: 10px; }
.sw i { border: 1px solid #8a8886; }
.theme { margin-top: 18px; }
.picker hr { border: 0; height: 2px; background: #c8c6c4; margin: 15px 0; width: 340px; }
.picker hr.wide { width: 342px; }
.picker hr.low { margin-bottom: 11px; }
.picker hr.last { margin-top: 10px; }
.recent { margin-top: 13px; }
.more { display: flex; gap: 10px; align-items: center; padding-left: 5px; height: 24px; font-size: 16.3px; color: #484644; }
.more span { padding-top: 2px; }
.revert { margin: 24px 0 0 208px; width: 132px; justify-content: center; color: #3b3a39; }
```
